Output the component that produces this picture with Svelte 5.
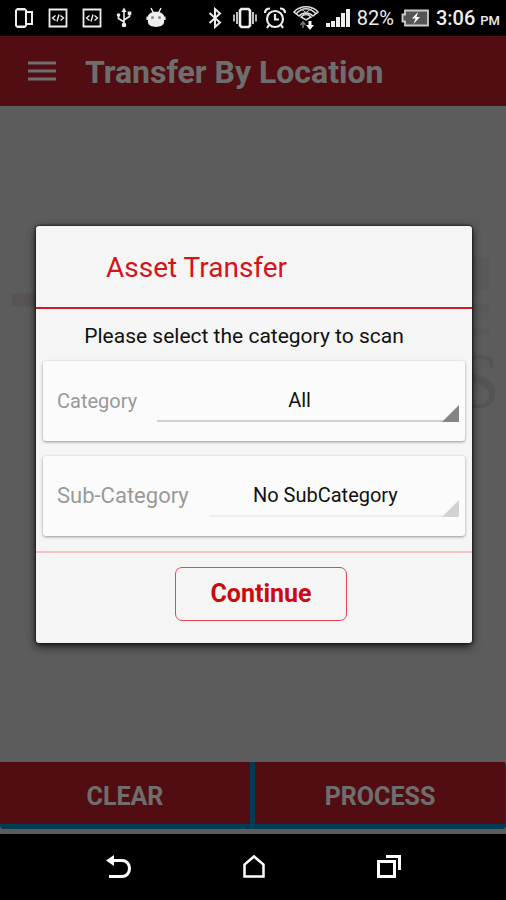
<script lang="ts">
  // Type for each option in the drop-downs
  type Option = {
    id: number;
    name: string;
  };

  let categories: Option[] = [{ id: 0, name: 'All' }];
  let subCategories: Option[] = [{ id: 0, name: 'No SubCategory' }];

  let category: number = 0;
  let subCategory: number = 0;
  let open: boolean = true;

  // Close the dialog and go on to scanning
  function proceed() {
    open = false;
  }

  // Start over with the default choice
  function clear() {
    category = 0;
    subCategory = 0;
    open = true;
  }
</script>

<div class="screen">
  <div class="status">
    <div class="notices">
      <svg width="20" height="22" viewBox="0 0 20 22" fill="none" stroke="#eee" stroke-width="2">
        <path d="M2 3.500L3.500 2H10.500L12 3.500V18.500L10.500 20H3.500L2 18.500Z" />
        <path d="M12 5H18V17H12" />
        <path d="M4 2.500H10M4 19.500H10" />
      </svg>
      {#each [1, 2] as n (n)}
        <svg width="20" height="22" viewBox="0 0 20 22" fill="none" stroke="#eee" stroke-width="1.800">
          <path d="M1.500 2.500H18.500V19.500H1.500Z" />
          <path d="M7.500 8.500L4.500 11L7.500 13.500M12.500 8.500L15.500 11L12.500 13.500M11 7.500L9 14.500" stroke-width="1.400" />
        </svg>
      {/each}
      <svg width="16" height="22" viewBox="0 0 16 22" fill="none" stroke="#eee" stroke-width="1.600">
        <path d="M8 4V18M8 15L2.500 11.500V8M8 13L13.500 9.500V6" />
        <path d="M8 0.500L10.500 5H5.500Z" fill="#eee" stroke="none" />
        <circle cx="8" cy="18" r="2.300" fill="#eee" stroke="none" />
        <circle cx="2.500" cy="8" r="1.800" fill="#eee" stroke="none" />
        <path d="M11.700 4.500H15.300V8H11.700Z" fill="#eee" stroke="none" />
      </svg>
      <svg width="20" height="22" viewBox="0 0 20 22">
        <path d="M2 9.500C2 3 18 3 18 9.500V15C18 21.500 2 21.500 2 15Z" fill="#eee" />
        <path d="M5 1L7.500 6M15 1L12.500 6M1.200 9.500V13M18.800 9.500V13" stroke="#eee" stroke-width="1.500" />
        <circle cx="6.500" cy="10.500" r="1.500" fill="#888" />
        <circle cx="13.500" cy="10.500" r="1.500" fill="#888" />
      </svg>
    </div>
    <div class="system">
      <svg width="18" height="22" viewBox="0 0 18 22" fill="none" stroke="#eee" stroke-width="2">
        <path d="M1.500 6L12 15.500L7 20V2L12 6.500L1.500 16" />
      </svg>
      <svg width="24" height="22" viewBox="0 0 24 22" fill="none" stroke="#eee" stroke-width="2.600">
        <path d="M7 3.500L8.500 2H15.500L17 3.500V18.500L15.500 20H8.500L7 18.500Z" />
        <path d="M4 5V17M20 5V17" stroke-width="1.600" />
        <path d="M1 7.500V14.500M23 7.500V14.500" stroke-width="1.500" />
      </svg>
      <svg width="22" height="22" viewBox="0 0 22 22" fill="none" stroke="#eee" stroke-width="2.200">
        <circle cx="11" cy="12" r="8" />
        <path d="M11 7V12.500H15M1 6C1 3 3 1.500 6 1.500M21 6C21 3 19 1.500 16 1.500M5 18L3 21M17 18L19 21" />
      </svg>
      <svg width="26" height="26" viewBox="0 0 26 26" fill="none" stroke="#ddd" stroke-width="1.500">
        <path d="M1 7C7 0 19 0 25 7L20 11C16 7 10 7 6 11Z" />
        <path d="M3 9C9 2 17 2 23 9M8 12C11 9 15 9 18 12L13 15Z" />
        <path d="M6 3C10 5 14 8 18 12M20 3C16 5 12 8 8 12" stroke-width="1" />
        <path d="M10 23V17M7.500 20L10 17L12.500 20" stroke="#777" />
        <path d="M15.500 16H18.500V20H21L17 25L13 20H15.500Z" fill="#fff" stroke="none" />
      </svg>
      <svg width="24" height="20" viewBox="0 0 24 20" fill="#eee">
        <path d="M0 15H4V19H0ZM5 13H9V19H5ZM10 9H14V19H10ZM15 5H19V19H15ZM20 1H24V19H20Z" />
      </svg>
      <span class="percent">82%</span>
      <svg width="28" height="18" viewBox="0 0 28 18">
        <path d="M4 1.500H27V16.500H4V12.500H1.500V5.500H4Z" fill="#555" stroke="#ccc" stroke-width="1.800" />
        <path d="M17 3L11 9.500H14.500L12.500 15L19 8H15.500Z" fill="#fff" />
      </svg>
      <span class="time">3:06 <small>PM</small></span>
    </div>
  </div>

  <div class="app">
    <header>
      <button class="menu" aria-label="Menu">
        <svg width="28" height="20" viewBox="0 0 28 20" stroke="#fafafa" stroke-width="3">
          <path d="M0 2H28M0 10H28M0 18H28" />
        </svg>
      </button>
      <h1>Transfer By Location</h1>
    </header>

    <main>
      <!-- Company mark behind the dialog -->
      <svg class="mark" viewBox="0 0 490 150" aria-hidden="true">
        <path d="M0 35H60V48H0Z" fill="#c9bfbd" />
        <path d="M440 0H474V32H440ZM440 46H474V54H440ZM440 70H474V76H440Z" fill="#cbcbcb" />
        <text x="441" y="148" font-size="78" fill="#c0c0c0">S</text>
      </svg>
    </main>

    <footer>
      <button on:click={clear}>CLEAR</button>
      <button>PROCESS</button>
    </footer>

    {#if open}
      <div class="overlay">
        <div class="dialog" role="dialog" aria-labelledby="dialog-title">
          <h2 id="dialog-title">Asset Transfer</h2>
          <p>Please select the category to scan</p>
          <div class="card">
            <label for="category">Category</label>
            <div class="spinner">
              <select id="category" bind:value={category}>
                {#each categories as option}
                  <option value={option.id}>{option.name}</option>
                {/each}
              </select>
            </div>
          </div>
          <div class="card">
            <label class="large" for="sub-category">Sub-Category</label>
            <div class="spinner off">
              <select id="sub-category" bind:value={subCategory} disabled>
                {#each subCategories as option}
                  <option value={option.id}>{option.name}</option>
                {/each}
              </select>
            </div>
          </div>
          <div class="actions">
            <button on:click={proceed}>Continue</button>
          </div>
        </div>
      </div>
    {/if}
  </div>

  <nav>
    <button aria-label="Back">
      <svg width="26" height="26" viewBox="0 0 26 26" fill="none" stroke="#fff" stroke-width="3">
        <path d="M6 6.500H16C26 6.500 26 22.500 16 22.500H3" />
        <path d="M0 6.500L8 1V12Z" fill="#fff" stroke="none" />
      </svg>
    </button>
    <button aria-label="Home">
      <svg width="26" height="26" viewBox="0 0 26 26" fill="none" stroke="#fff" stroke-width="2.500">
        <path d="M3.500 22.500V10.500L13 2.500L22.500 10.500V22.500Z" />
      </svg>
    </button>
    <button aria-label="Recent apps">
      <svg width="26" height="26" viewBox="0 0 26 26" fill="none" stroke="#fff" stroke-width="3">
        <path d="M2.500 7.500H18.500V22.500H2.500Z" />
        <path d="M10 2.500H23.500V16" />
      </svg>
    </button>
  </nav>
</div>

<style>
  :global(body) {
    margin: 0;
    background: #000;
  }

  .screen {
    display: flex;
    flex-direction: column;
    min-height: 100vh;
    font-family: Roboto, "Liberation Sans", sans-serif;
  }

  button {
    border: none;
    padding: 0;
    background: none;
    font-family: inherit;
    cursor: pointer;
  }

  svg {
    display: block;
  }

  .status {
    display: flex;
    align-items: center;
    justify-content: space-between;
    height: 36px;
    padding: 0 6px 0 14px;
    background: #000;
    color: #eee;
  }

  .notices {
    display: flex;
    align-items: center;
    gap: 14px;
  }

  .system {
    display: flex;
    align-items: center;
    gap: 7px;
  }

  .percent {
    font-size: 20px;
  }

  .time {
    font-size: 20px;
    font-weight: 500;
    white-space: nowrap;
  }

  .time small {
    font-size: 13px;
  }

  /* Everything between the system bars, dimmed while the dialog is open */
  .app {
    position: relative;
    flex: 1;
    display: flex;
    flex-direction: column;
    background: #d1d1d1;
  }

  header {
    display: flex;
    align-items: center;
    gap: 29px;
    height: 70px;
    padding: 0 28px;
    background: #ba1e29;
  }

  h1 {
    margin: 0;
    padding-top: 2px;
    font-size: 32px;
    line-height: 40px;
    font-weight: 700;
    color: #fafafa;
  }

  main {
    flex: 1;
    display: flex;
    flex-direction: column;
    padding: 152px 0 0 12px;
  }

  .mark {
    width: 100%;
    font-family: "Liberation Serif", serif;
  }

  footer {
    display: flex;
    gap: 5px;
    margin-bottom: 5px;
    padding-right: 1px;
    border-bottom: 5px solid #0088be;
    border-radius: 4px;
    background: #0088be;
  }

  footer button {
    flex: 1;
    height: 62px;
    padding-top: 6px;
    background: #ba1e29;
    color: #fafafa;
    font-size: 25px;
    font-weight: 700;
  }

  .overlay {
    position: absolute;
    inset: 0;
    display: flex;
    align-items: center;
    justify-content: center;
    padding: 0 34px 2px 36px;
    background: rgba(0, 0, 0, 0.56);
  }

  .dialog {
    flex: 1;
    max-width: 560px;
    border-radius: 3px;
    background: #f5f5f5;
    box-shadow: 0 0 3px #000, 0 3px 10px rgba(0, 0, 0, 0.8);
  }

  h2 {
    margin: 0;
    padding: 24px 70px 21px;
    border-bottom: 2px solid #cf1b22;
    font-size: 28px;
    line-height: 36px;
    font-weight: 400;
    color: #d3141a;
  }

  p {
    margin: 0;
    padding: 12px 20px 10px 0;
    text-align: center;
    font-size: 21px;
    line-height: 30px;
    color: #111;
  }

  .card {
    display: flex;
    align-items: center;
    gap: 20px;
    height: 80px;
    margin: 0 7px 15px;
    padding: 0 6px 0 14px;
    border-radius: 3px;
    background: #fbfbfb;
    box-shadow: 0 1px 3px rgba(0, 0, 0, 0.4);
  }

  label {
    font-size: 20px;
    color: #999;
  }

  label.large {
    font-size: 22px;
  }

  .spinner {
    position: relative;
    flex: 1;
    border-bottom: 2px solid #d0d0d0;
  }

  .spinner::after {
    content: "";
    position: absolute;
    right: 0;
    bottom: -2px;
    border-left: 17px solid transparent;
    border-bottom: 17px solid #848484;
    pointer-events: none;
  }

  .spinner.off {
    border-color: #eee;
  }

  .spinner.off::after {
    border-bottom-color: #d2d2d2;
  }

  select {
    appearance: none;
    width: 100%;
    height: 40px;
    border: none;
    padding: 0 17px 0 0;
    background: none;
    font-family: inherit;
    font-size: 20px;
    text-align: center;
    text-align-last: center;
    color: #111;
    opacity: 1;
  }

  .actions {
    display: flex;
    justify-content: center;
    padding: 14px 0 22px 14px;
    border-top: 2px solid #f3c4c6;
  }

  .actions button {
    width: 172px;
    height: 54px;
    border: 1px solid #e2484d;
    border-radius: 7px;
    color: #cc0a10;
    font-size: 25px;
    font-weight: 700;
  }

  nav {
    display: flex;
    justify-content: center;
    gap: 109px;
    padding: 20px 0 20px 2px;
    background: #000;
  }
</style>
